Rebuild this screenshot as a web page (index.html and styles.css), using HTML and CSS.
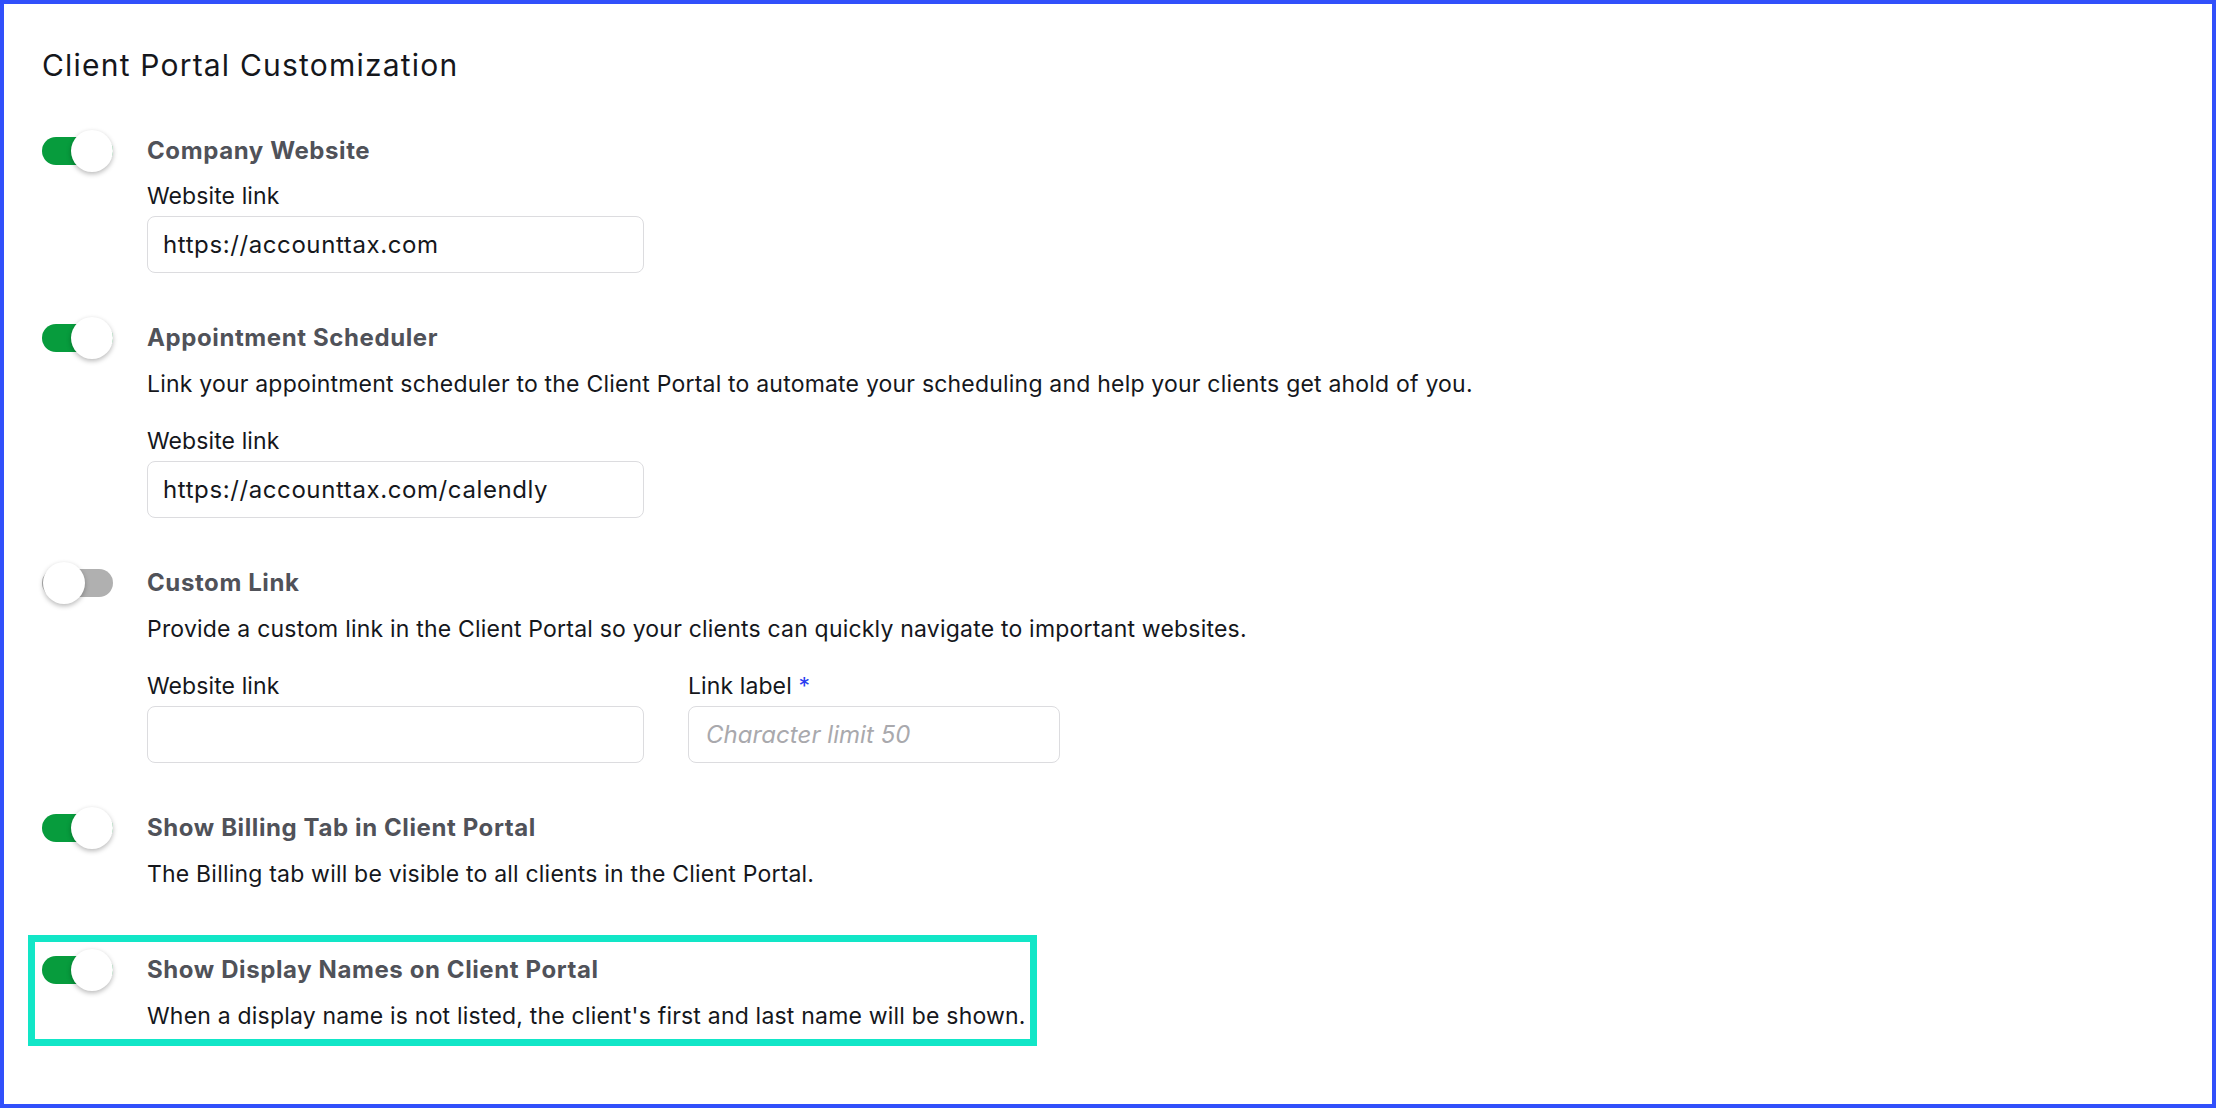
FILE: index.html
```html
<!DOCTYPE html>
<html lang="en">
<head>
<meta charset="utf-8">
<title>Client Portal Customization</title>
<link rel="stylesheet" href="styles.css">
</head>
<body>
<div class="frame">
  <h1 class="title">Client Portal Customization</h1>

  <div class="row">
    <div class="toggle on"><span class="track"></span><span class="knob"></span></div>
    <div class="content">
      <div class="heading">Company Website</div>
      <div class="field">
        <label class="label">Website link</label>
        <div class="input wide">https://accounttax.com</div>
      </div>
    </div>
  </div>

  <div class="row">
    <div class="toggle on"><span class="track"></span><span class="knob"></span></div>
    <div class="content">
      <div class="heading">Appointment Scheduler</div>
      <div class="desc">Link your appointment scheduler to the Client Portal to automate your scheduling and help your clients get ahold of you.</div>
      <div class="field spaced">
        <label class="label">Website link</label>
        <div class="input wide">https://accounttax.com/calendly</div>
      </div>
    </div>
  </div>

  <div class="row">
    <div class="toggle off"><span class="track"></span><span class="knob"></span></div>
    <div class="content">
      <div class="heading">Custom Link</div>
      <div class="desc">Provide a custom link in the Client Portal so your clients can quickly navigate to important websites.</div>
      <div class="fields spaced">
        <div class="field">
          <label class="label">Website link</label>
          <div class="input wide"></div>
        </div>
        <div class="field">
          <label class="label">Link label <span class="req">*</span></label>
          <div class="input narrow placeholder">Character limit 50</div>
        </div>
      </div>
    </div>
  </div>

  <div class="row">
    <div class="toggle on"><span class="track"></span><span class="knob"></span></div>
    <div class="content">
      <div class="heading">Show Billing Tab in Client Portal</div>
      <div class="desc">The Billing tab will be visible to all clients in the Client Portal.</div>
    </div>
  </div>

  <div class="highlight">
    <div class="row last">
      <div class="toggle on"><span class="track"></span><span class="knob"></span></div>
      <div class="content">
        <div class="heading">Show Display Names on Client Portal</div>
        <div class="desc">When a display name is not listed, the client's first and last name will be shown.</div>
      </div>
    </div>
  </div>
</div>
</body>
</html>
```
FILE: styles.css
```css
* { box-sizing: border-box; }
html, body { margin: 0; padding: 0; background: #ffffff; }
body {
  font-family: Inter, "Noto Sans", "Liberation Sans", sans-serif;
  color: #15171c;
}
.frame {
  width: 2216px;
  height: 1108px;
  border: 4px solid #3150fb;
  padding: 43px 38px 0 38px;
  background: #ffffff;
}
.title {
  margin: 0;
  font-size: 30px;
  line-height: 36px;
  font-weight: 400;
  letter-spacing: 1.2px;
  color: #15171c;
}
.row {
  display: flex;
  gap: 34px;
  margin-top: 50px;
}
.frame > .row:first-of-type { margin-top: 53px; }
.toggle {
  position: relative;
  width: 71px;
  height: 30px;
  flex: none;
}
.track {
  position: absolute;
  left: 0;
  top: 1px;
  width: 71px;
  height: 28px;
  border-radius: 14px;
}
.toggle.on .track { background: #079c3d; }
.toggle.off .track { background: #b0b0b0; }
.knob {
  position: absolute;
  top: -6px;
  width: 42px;
  height: 42px;
  border-radius: 50%;
  background: #ffffff;
  box-shadow: 0 2px 5px rgba(0,0,0,0.28);
}
.toggle.on .knob { left: 29px; }
.toggle.off .knob { left: 1px; }
.content { display: flex; flex-direction: column; }
.heading {
  font-size: 24px;
  line-height: 30px;
  font-weight: 700;
  letter-spacing: 0.6px;
  color: #505259;
}
.desc {
  margin-top: 16px;
  font-size: 23px;
  line-height: 30px;
  letter-spacing: 0.2px;
  color: #15171c;
}
.field { display: flex; flex-direction: column; margin-top: 15px; }
.field.spaced { margin-top: 27px; }
.fields { display: flex; gap: 44px; }
.fields.spaced { margin-top: 27px; }
.fields .field { margin-top: 0; }
.label {
  font-size: 23px;
  line-height: 30px;
  letter-spacing: 0.1px;
  color: #15171c;
}
.req { color: #2a3cf0; }
.input {
  margin-top: 5px;
  height: 57px;
  border: 1px solid #dcdcdf;
  border-radius: 8px;
  padding: 0 15px;
  font-size: 24px;
  line-height: 55px;
  letter-spacing: 0.6px;
  color: #15171c;
}
.input.wide { width: 497px; }
.input.narrow { width: 372px; padding-left: 17px; }
.input.placeholder { color: #a9a9ad; font-style: italic; letter-spacing: 0.05px; }
.highlight {
  margin: 46px 0 0 -14px;
  width: 1009px;
  border: 7px solid #12e6c7;
  padding: 13px 0 8px 7px;
}
.highlight .row { margin-top: 0; }
```
